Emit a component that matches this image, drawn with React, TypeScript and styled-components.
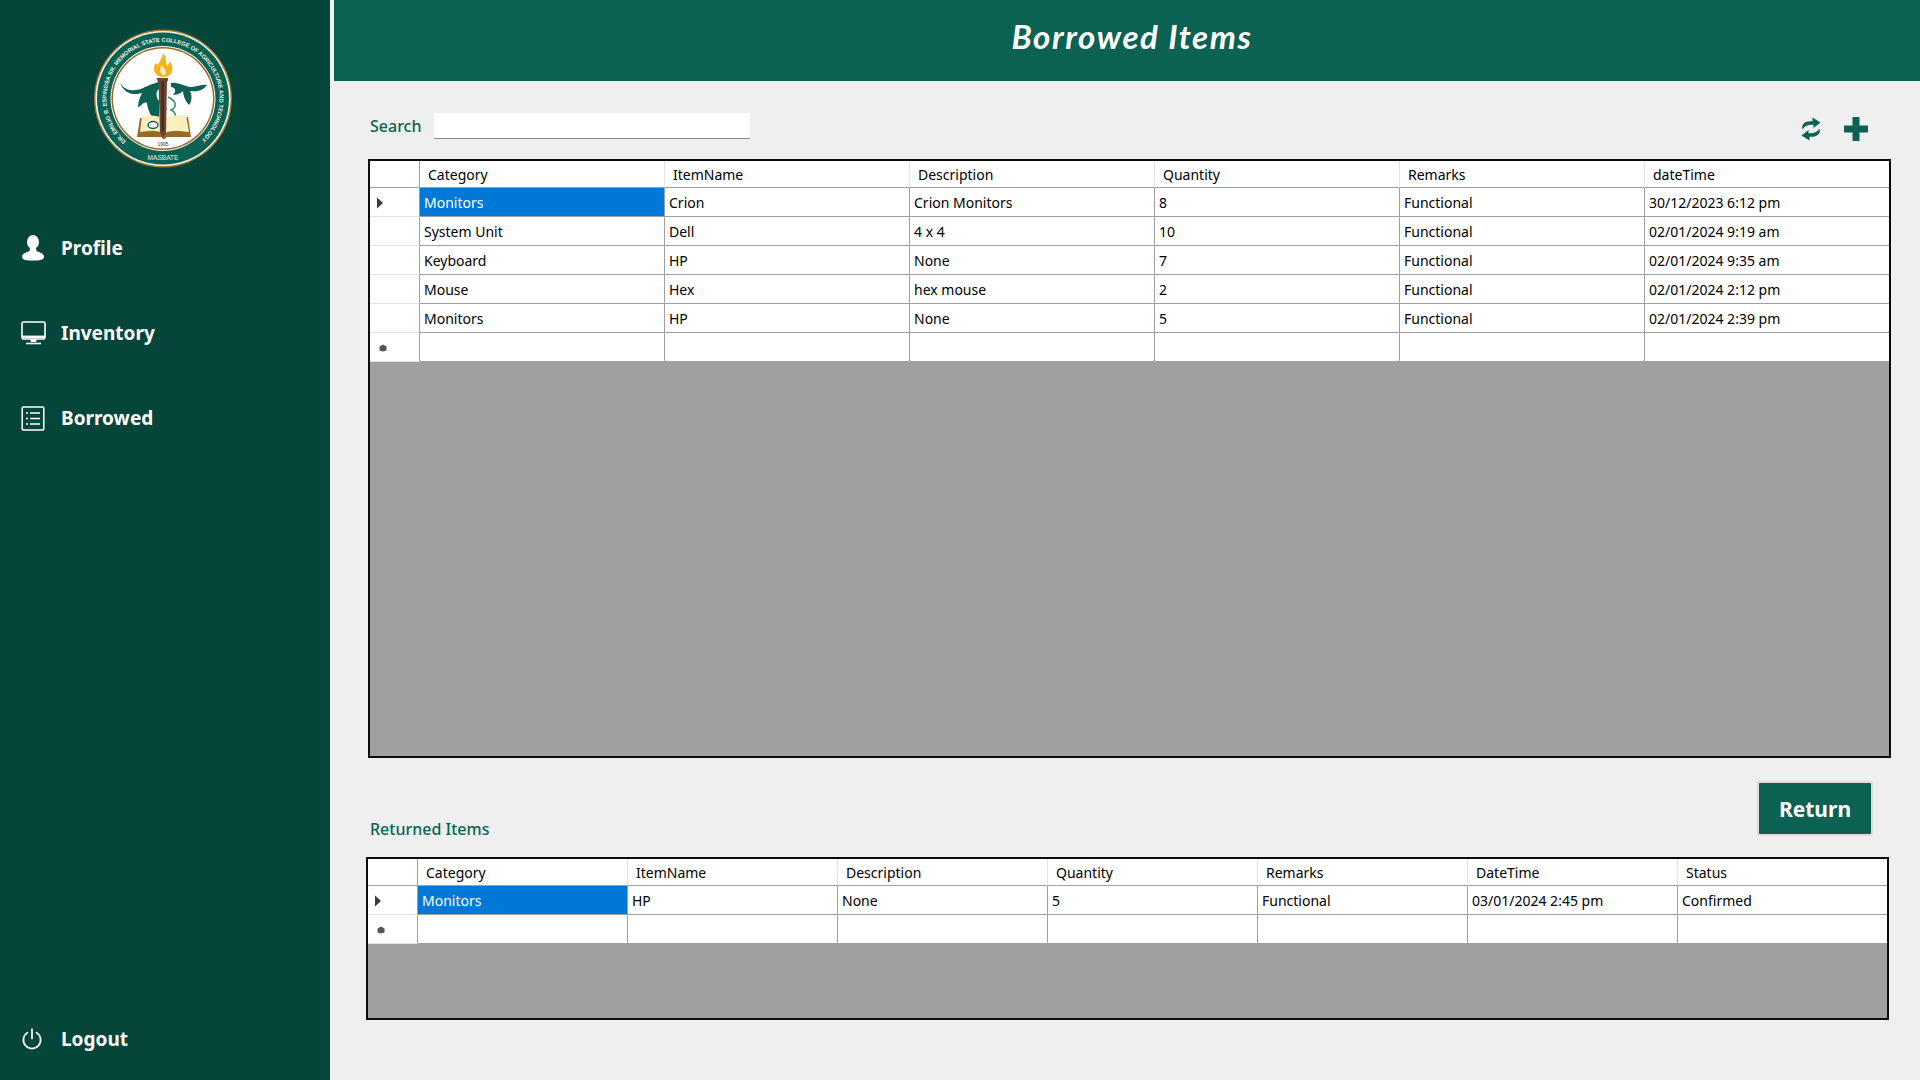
import React from 'react'
import styled, { createGlobalStyle } from 'styled-components'

const GlobalStyle = createGlobalStyle`
    html, body {
        margin: 0;
        padding: 0;
        background: #efefef;
        overflow: hidden;
    }
    * { box-sizing: border-box; }
`

const font = `"Noto Sans", "Open Sans", "Liberation Sans", sans-serif`

const Page = styled.div`
    display: flex;
    width: 1920px;
    height: 1080px;
    font-family: ${font};
    background: #efefef;
`

const Sidebar = styled.aside`
    flex: 0 0 330px;
    height: 1080px;
    background: #06453a;
    display: flex;
    flex-direction: column;
    padding: 29px 0 0 0;
`

const LogoWrap = styled.div`
    display: flex;
    justify-content: center;
    margin-left: -4px;
    height: 140px;
`

const NavList = styled.nav`
    display: flex;
    flex-direction: column;
    margin-top: 57px;
    gap: 41px;
`

const NavItem = styled.div`
    display: flex;
    align-items: center;
    height: 44px;
    padding-left: 21px;
    color: #fff;
    font-weight: 700;
    font-size: 19px;
`

const NavIcon = styled.span`
    display: flex;
    width: 40px;
    justify-content: flex-start;
`

const Spacer = styled.div`
    flex: 1;
`

const LogoutItem = styled(NavItem)`
    margin-bottom: 19px;
`

const Main = styled.main`
    flex: 1;
    min-width: 0;
    margin-left: 4px;
    display: flex;
    flex-direction: column;
`

const TitleBar = styled.header`
    height: 81px;
    background: #0b6252;
    display: flex;
    align-items: center;
    justify-content: center;
    padding: 0 0 9px 10px;
    color: #fff;
    font-family: "Lato", "Open Sans", sans-serif;
    font-style: italic;
    font-weight: 700;
    font-size: 33px;
    letter-spacing: 1.6px;
`

const Content = styled.div`
    min-width: 0;
    padding: 0 29px 0 34px;
    display: flex;
    flex-direction: column;
`

const SearchRow = styled.div`
    height: 78px;
    display: flex;
    align-items: flex-start;
    padding: 32px 23px 0 2px;
`

const GreenLabel = styled.label`
    color: #0b6252;
    font-size: 16px;
    font-weight: 500;
    line-height: 26px;
`

const SearchInput = styled.div`
    width: 316px;
    height: 26px;
    margin-left: 13px;
    background: #fff;
    border-bottom: 1px solid #8a8a8a;
`

const ToolIcons = styled.div`
    margin-left: auto;
    display: flex;
    align-items: center;
    gap: 23px;
    padding-top: 4px;
`

const GridBox = styled.div<{ $height: number; $shift?: number }>`
    height: ${(p) => p.$height}px;
    margin-left: ${(p) => p.$shift || 0}px;
    margin-right: ${(p) => -(p.$shift || 0)}px;
    border: 2px solid #0c0c0c;
    background: #a0a0a0;
    overflow: hidden;
`

const GridTable = styled.div<{ $cols: number; $colWidth: number }>`
    display: grid;
    grid-template-columns: 50px repeat(${(p) => p.$cols}, ${(p) => p.$colWidth}px);
    grid-template-rows: 27px;
    grid-auto-rows: 29px;
    background: #fff;
`

const CornerCell = styled.div`
    border-right: 1px solid #a0a0a0;
    border-bottom: 1px solid #a0a0a0;
    background: #fff;
`

const HeadCell = styled.div`
    display: flex;
    align-items: center;
    padding-left: 8px;
    font-size: 14px;
    color: #000;
    border-right: 1px solid #e4e4e4;
    border-bottom: 1px solid #a0a0a0;
    background: #fff;
`

const RowHead = styled.div`
    display: flex;
    align-items: center;
    padding-left: 6px;
    background: #fff;
    border-right: 1px solid #a0a0a0;
    border-bottom: 1px solid #e4e4e4;
`

const Cell = styled.div<{ $selected?: boolean }>`
    display: flex;
    align-items: center;
    padding-left: 4px;
    font-size: 14px;
    white-space: nowrap;
    color: ${(p) => (p.$selected ? '#fff' : '#000')};
    background: ${(p) => (p.$selected ? '#0078d7' : '#fff')};
    border-right: 1px solid #a0a0a0;
    border-bottom: 1px solid #a0a0a0;
`

const GapRow = styled.div`
    height: 99px;
    display: flex;
    align-items: flex-end;
    justify-content: space-between;
    padding: 0 18px 0 2px;
`

const ReturnedLabel = styled(GreenLabel)`
    margin-bottom: 15px;
`

const ReturnButton = styled.button`
    width: 116px;
    height: 55px;
    margin-bottom: 21px;
    background: #0b6252;
    border: 2px solid #dcdcdc;
    border-radius: 3px;
    color: #fff;
    font-family: ${font};
    font-weight: 700;
    font-size: 21px;
    padding: 0;
`

const RowArrow = () => (
    <svg width="8" height="12" viewBox="0 0 8 12" style={{ marginTop: 2 }}>
        <path d="M1 0.5 L7 6 L1 11.5 Z" fill="#3a3a3a" />
    </svg>
)

const NewRowMark = () => (
    <svg width="8" height="8" viewBox="0 0 8 8" style={{ marginLeft: 3, marginTop: 2 }}>
        <path d="M4 0.5 L7.5 2.5 L7.5 6.5 L4 7.5 L0.5 6.5 L0.5 2.5 Z" fill="#555" />
    </svg>
)

const ProfileIcon = () => (
    <svg width="24" height="26" viewBox="0 0 24 26">
        <ellipse cx="12" cy="7" rx="6" ry="7" fill="#fff" />
        <path d="M9 13 L15 13 L15.5 16 C19 17.5 23 18.5 23 22 C23 25 18 25.5 12 25.5 C6 25.5 1 25 1 22 C1 18.5 5 17.5 8.5 16 Z" fill="#fff" />
    </svg>
)

const MonitorIcon = () => (
    <svg width="25" height="24" viewBox="0 0 25 24" fill="none" stroke="#fff">
        <rect x="1" y="1" width="23" height="17" rx="1.5" strokeWidth="1.6" />
        <path d="M1 15.8 H24" strokeWidth="2.4" />
        <path d="M10 18 V20.5 H15 V18" fill="#fff" strokeWidth="1" />
        <path d="M5 22.5 H20" strokeWidth="1.6" />
    </svg>
)

const ListIcon = () => (
    <svg width="24" height="25" viewBox="0 0 24 25" fill="none" stroke="#fff">
        <rect x="1.2" y="1" width="21.6" height="23" rx="1" strokeWidth="1.5" />
        <path d="M9 7 H19 M9 12.5 H19 M9 18 H19" strokeWidth="1.5" />
        <path d="M5 7 H7 M5 12.5 H7 M5 18 H7" strokeWidth="1.5" />
    </svg>
)

const PowerIcon = () => (
    <svg width="22" height="22" viewBox="0 0 22 22" fill="none" stroke="#fff" strokeWidth="1.7" strokeLinecap="round">
        <path d="M6.5 4.6 A8.6 8.6 0 1 0 15.5 4.6" />
        <path d="M11 1 V10.5" />
    </svg>
)

const RefreshIcon = () => (
    <svg width="20" height="24" viewBox="0 0 20 24" fill="#0b6252">
        <path d="M1.5 12.5 C0 7 4 3.6 11.5 4.2 L11.5 0.5 L19.5 5.6 L12.5 11 L12.5 7.8 C7.5 7.4 4 8.6 1.5 12.5 Z" />
        <path d="M18.5 11.5 C20 17 16 20.4 8.5 19.8 L8.5 23.5 L0.5 18.4 L7.5 13 L7.5 16.2 C12.5 16.6 16 15.4 18.5 11.5 Z" />
    </svg>
)

const PlusIcon = () => (
    <svg width="24" height="24" viewBox="0 0 24 24" fill="#0b6252">
        <path d="M8.5 0 H15.5 V8.5 H24 V15.5 H15.5 V24 H8.5 V15.5 H0 V8.5 H8.5 Z" />
    </svg>
)

const Logo = () => (
    <svg width="140" height="140" viewBox="0 0 140 140">
        <defs>
            <path id="sealArc" d="M 33 112.1 A 56.5 56.5 0 1 1 107 112.1" />
        </defs>
        <circle cx="70" cy="69.5" r="69" fill="#9a7a34" />
        <circle cx="70" cy="69.5" r="67.6" fill="#f4f4ee" />
        <circle cx="70" cy="69.5" r="66" fill="#0b6252" />
        <circle cx="70" cy="69.5" r="52.5" fill="#f6f6f2" />
        <circle cx="70" cy="69.5" r="51.5" fill="#96682a" />
        <circle cx="70" cy="69.5" r="50" fill="#fff" />
        <text fontFamily="Liberation Sans, sans-serif" fontSize="5.8" fontWeight="700" fill="#f2f2ea">
            <textPath href="#sealArc" textLength="272" lengthAdjust="spacing">DR. EMILIO B. ESPINOSA SR. MEMORIAL STATE COLLEGE OF AGRICULTURE AND TECHNOLOGY</textPath>
        </text>
        <text x="70" y="131" textAnchor="middle" fontFamily="Liberation Sans, sans-serif" fontSize="6.6" fill="#eef2ee">MASBATE</text>
        <text x="70" y="116.5" textAnchor="middle" fontFamily="Liberation Sans, sans-serif" fontSize="5" fill="#333">1995</text>
        {/* bull head and horn */}
        <path d="M27 53 C31 63 43 63 52 58 C59 55 64 53 68 53 L68 59 C63 60 62 67 66 72 L66 93 L62 90 C58 88 55 82 54 74 C50 72 48 78 45 78 C45 73 47 68 49 64 C40 67 30 64 27 53 Z" fill="#0b6252" />
        {/* leaves */}
        <path d="M78 54 C86 53 92 58 98 58 C104 58 110 55 114 56 C110 62 103 63 97 62 C100 68 98 74 96 76 C92 72 90 66 90 62 C87 65 82 66 80 66 C84 62 82 58 78 58 Z" fill="#0b6252" />
        <path d="M75 68 C84 72 84 78 78 81 C84 84 84 90 78 92 L76 98" fill="none" stroke="#3d8a72" strokeWidth="1.6" />
        <path d="M74 70 C69 72 70 78 74 80 C69 83 70 88 74 90" fill="none" stroke="#7fb5a2" strokeWidth="1" />
        {/* book */}
        <path d="M47 89 L68 89 L71 105 L74 89 L95 88 L98 108 L74 108 L71 110.5 L68 108 L44 108 Z" fill="#96682a" />
        <path d="M49 87 C56 86 64 86 69 89 L70 104 C64 101 55 102 47 103 Z" fill="#fbeebf" />
        <path d="M73 89 C78 86 86 86 93 86 L96 103 C88 102 78 101 72 104 Z" fill="#fbeebf" />
        <ellipse cx="60" cy="96" rx="5" ry="3.5" fill="#fff" stroke="#0b6252" strokeWidth="1.4" />
        {/* torch */}
        <path d="M63.5 49 L75.5 49 L74 54 L73 104 L69.8 109 L67 104 L65.5 54 Z" fill="#6a4630" />
        <path d="M68.4 52 H71 V102 H68.4 Z" fill="#4a2d1c" />
        {/* flame */}
        <path d="M70 48 C63 48 59.5 42 61.5 36 C62.5 33.5 64.5 34.5 64.5 37 C66 33 69.5 29 70 24 C74.5 29 72 34 74.5 37 C75.5 35 76.5 33.5 76.5 32 C81.5 38 80.5 48 70 48 Z" fill="#f6b21b" />
        <path d="M70 46.5 C66.5 44 66.5 39.5 69 36 C70 39.5 72.5 40 72.5 42 C73.5 44 72.5 45.5 70 46.5 Z" fill="#fff3c0" />
    </svg>
)

const topCols = ['Category', 'ItemName', 'Description', 'Quantity', 'Remarks', 'dateTime']
const topRows = [
    ['Monitors', 'Crion', 'Crion Monitors', '8', 'Functional', '30/12/2023 6:12 pm'],
    ['System Unit', 'Dell', '4 x 4', '10', 'Functional', '02/01/2024 9:19 am'],
    ['Keyboard', 'HP', 'None', '7', 'Functional', '02/01/2024 9:35 am'],
    ['Mouse', 'Hex', 'hex mouse', '2', 'Functional', '02/01/2024 2:12 pm'],
    ['Monitors', 'HP', 'None', '5', 'Functional', '02/01/2024 2:39 pm'],
]

const bottomCols = ['Category', 'ItemName', 'Description', 'Quantity', 'Remarks', 'DateTime', 'Status']
const bottomRows = [
    ['Monitors', 'HP', 'None', '5', 'Functional', '03/01/2024 2:45 pm', 'Confirmed'],
]

const DataGrid = (props: any) => {
    const { cols, rows, colWidth } = props
    return <GridTable $cols={cols.length} $colWidth={colWidth}>
        <CornerCell />
        {cols.map((c: string) => <HeadCell key={c}>{c}</HeadCell>)}
        {rows.map((row: string[], i: number) => (
            <React.Fragment key={i}>
                <RowHead>{i === 0 && <RowArrow />}</RowHead>
                {row.map((v: string, j: number) => (
                    <Cell key={j} $selected={i === 0 && j === 0}>{v}</Cell>
                ))}
            </React.Fragment>
        ))}
        <RowHead><NewRowMark /></RowHead>
        {cols.map((c: string) => <Cell key={c} />)}
    </GridTable>
}

const App = () => {
    return <Page>
        <GlobalStyle />
        <Sidebar>
            <LogoWrap><Logo /></LogoWrap>
            <NavList>
                <NavItem><NavIcon><ProfileIcon /></NavIcon>Profile</NavItem>
                <NavItem><NavIcon><MonitorIcon /></NavIcon>Inventory</NavItem>
                <NavItem><NavIcon><ListIcon /></NavIcon>Borrowed</NavItem>
            </NavList>
            <Spacer />
            <LogoutItem><NavIcon><PowerIcon /></NavIcon>Logout</LogoutItem>
        </Sidebar>
        <Main>
            <TitleBar>Borrowed Items</TitleBar>
            <Content>
                <SearchRow>
                    <GreenLabel>Search</GreenLabel>
                    <SearchInput />
                    <ToolIcons>
                        <RefreshIcon />
                        <PlusIcon />
                    </ToolIcons>
                </SearchRow>
                <GridBox $height={599}>
                    <DataGrid cols={topCols} rows={topRows} colWidth={245} />
                </GridBox>
                <GapRow>
                    <ReturnedLabel>Returned Items</ReturnedLabel>
                    <ReturnButton>Return</ReturnButton>
                </GapRow>
                <GridBox $height={163} $shift={-2}>
                    <DataGrid cols={bottomCols} rows={bottomRows} colWidth={210} />
                </GridBox>
            </Content>
        </Main>
    </Page>
}

export default App
